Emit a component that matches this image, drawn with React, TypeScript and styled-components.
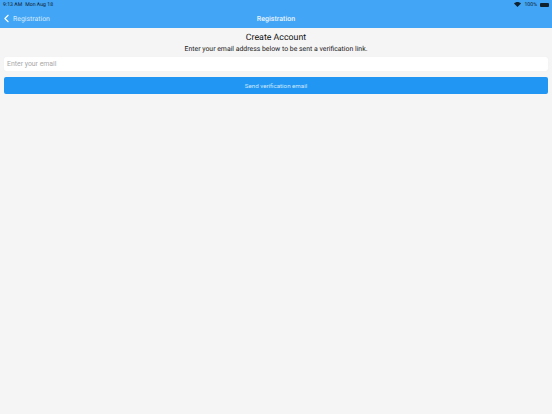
import styled, { createGlobalStyle } from 'styled-components';
import { ChevronLeft } from 'lucide-react';

const GlobalStyle = createGlobalStyle`
  html, body {
    margin: 0;
    padding: 0;
    height: 100%;
    background-color: #f5f5f5;
    font-family: Roboto, 'Liberation Sans', Arial, sans-serif;
    text-rendering: geometricPrecision;
  }
`;

const Screen = styled.div`
  width: 552px;
  height: 414px;
  overflow: hidden;
  display: flex;
  flex-direction: column;
`;

const Header = styled.header`
  background-color: #42a5f5;
  height: 28px;
  color: #fff;
  display: flex;
  flex-direction: column;
`;

const StatusBar = styled.div`
  height: 9px;
  padding: 0 3px;
  display: flex;
  align-items: center;
  justify-content: space-between;
  font-size: 5.2px;
  color: #10222e;
`;

const StatusGroup = styled.div`
  display: flex;
  align-items: center;
  gap: 3px;
`;

const Battery = styled.span`
  width: 9px;
  height: 4px;
  border-radius: 1px;
  background-color: #10222e;
`;

const NavBar = styled.nav`
  flex: 1;
  display: grid;
  grid-template-columns: 1fr auto 1fr;
  align-items: center;
`;

const BackLink = styled.a`
  display: flex;
  align-items: center;
  font-size: 6.9px;
  color: #d4eafc;
`;

const NavTitle = styled.div`
  font-size: 7.1px;
  font-weight: 500;
  color: #e8f4fe;
`;

const Content = styled.main`
  padding: 4px 4px 0;
  display: flex;
  flex-direction: column;
  align-items: stretch;
`;

const Title = styled.h1`
  margin: 0;
  font-size: 8.8px;
  line-height: 12px;
  font-weight: normal;
  text-align: center;
  color: #111;
`;

const Subtitle = styled.p`
  margin: 0;
  font-size: 6.9px;
  line-height: 11px;
  text-align: center;
  color: #222;
`;

const EmailInput = styled.input`
  margin-top: 2px;
  height: 13.5px;
  padding: 0 3px;
  border: none;
  border-radius: 2px;
  background-color: #fff;
  box-shadow: 0 0 1px #e6e6e6;
  font-family: inherit;
  font-size: 6.9px;
  outline: none;

  &::placeholder {
    color: #a9a9a9;
    opacity: 1;
  }
`;

const SendButton = styled.button`
  margin-top: 6.5px;
  height: 17px;
  border: none;
  border-radius: 2px;
  background-color: #2196f3;
  color: #cfe8fc;
  font-family: inherit;
  font-size: 6.2px;
  padding: 0;
`;

const WifiIcon = () => (
  <svg width="7" height="5" viewBox="0 0 14 10">
    <path d="M7 10 0 3c4-4 10-4 14 0z" fill="#10222e" />
  </svg>
);

export default function App() {
  return (
    <Screen>
      <GlobalStyle />
      <Header>
        <StatusBar>
          <StatusGroup>
            <span>9:13 AM</span>
            <span>Mon Aug 18</span>
          </StatusGroup>
          <StatusGroup>
            <WifiIcon />
            <span>100%</span>
            <Battery />
          </StatusGroup>
        </StatusBar>
        <NavBar>
          <BackLink>
            <ChevronLeft size={13} strokeWidth={2} color="#fff" />
            Registration
          </BackLink>
          <NavTitle>Registration</NavTitle>
        </NavBar>
      </Header>
      <Content>
        <Title>Create Account</Title>
        <Subtitle>Enter your email address below to be sent a verification link.</Subtitle>
        <EmailInput placeholder="Enter your email" />
        <SendButton>Send verification email</SendButton>
      </Content>
    </Screen>
  );
}
